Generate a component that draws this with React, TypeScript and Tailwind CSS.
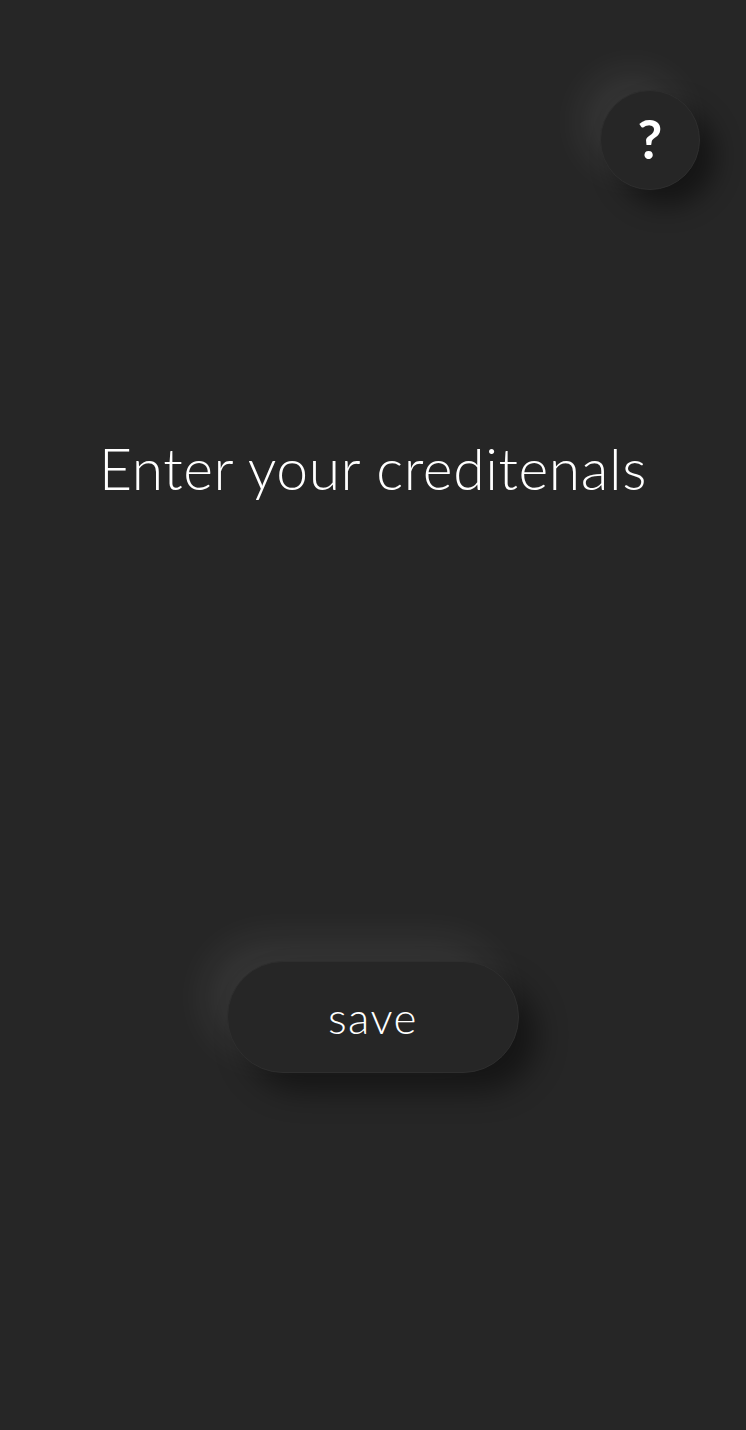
const App = () => {
  return (
    <div
      className="min-h-[1430px] w-full bg-[#262626] flex flex-col text-white"
      style={{ fontFamily: "Lato, 'Open Sans', sans-serif" }}
    >
      <div className="flex justify-end pt-[90px] pr-[46px]">
        <button className="w-[100px] h-[100px] rounded-full bg-[#262626] border border-[#2e2e2e] flex items-center justify-center text-[54px] font-bold leading-none shadow-[-18px_-18px_40px_rgba(255,255,255,0.08),16px_16px_26px_rgba(0,0,0,0.45)]">
          <span className="-mt-[2px]">?</span>
        </button>
      </div>
      <h1 className="mt-[250px] text-center text-[57px] font-light leading-none tracking-[0.6px]">
        Enter your creditenals
      </h1>
      <div className="flex justify-center mt-[464px]">
        <button className="w-[292px] h-[112px] rounded-full bg-[#262626] border border-[#2e2e2e] text-[44px] font-light tracking-[1.5px] shadow-[-20px_-20px_44px_rgba(255,255,255,0.08),18px_18px_30px_rgba(0,0,0,0.45)]">
          save
        </button>
      </div>
    </div>
  );
};

export default App;
